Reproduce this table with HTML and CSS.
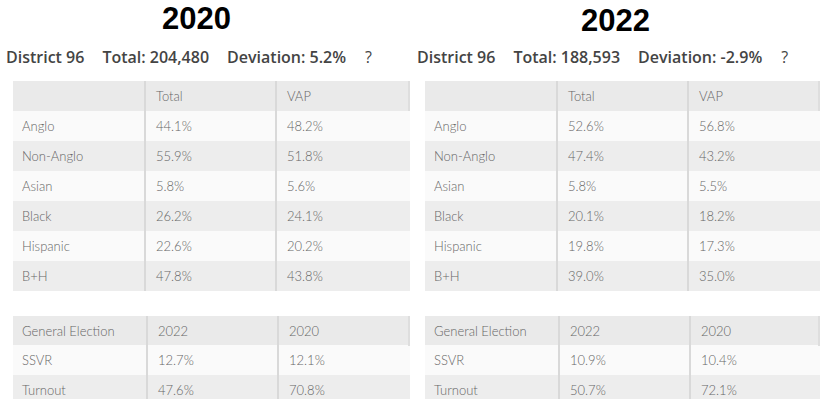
FILE: index.html
```html
<!DOCTYPE html>
<html>
<head>
<meta charset="utf-8">
<link rel="stylesheet" href="styles.css">
</head>
<body>
<div class="page">
  <section class="panel panel-left">
    <h1 class="title">2020</h1>
    <div class="summary">
      <span>District 96</span>
      <span>Total: 204,480</span>
      <span>Deviation: 5.2%</span>
      <span class="help">?</span>
    </div>
    <div class="tbl demo">
      <div class="row head"><div class="c">&nbsp;</div><div class="c">Total</div><div class="c">VAP</div></div>
      <div class="row light"><div class="c">Anglo</div><div class="c">44.1%</div><div class="c">48.2%</div></div>
      <div class="row"><div class="c">Non-Anglo</div><div class="c">55.9%</div><div class="c">51.8%</div></div>
      <div class="row light"><div class="c">Asian</div><div class="c">5.8%</div><div class="c">5.6%</div></div>
      <div class="row"><div class="c">Black</div><div class="c">26.2%</div><div class="c">24.1%</div></div>
      <div class="row light"><div class="c">Hispanic</div><div class="c">22.6%</div><div class="c">20.2%</div></div>
      <div class="row"><div class="c">B+H</div><div class="c">47.8%</div><div class="c">43.8%</div></div>
    </div>
    <div class="tbl elect">
      <div class="row head"><div class="c">General Election</div><div class="c">2022</div><div class="c">2020</div></div>
      <div class="row light"><div class="c">SSVR</div><div class="c">12.7%</div><div class="c">12.1%</div></div>
      <div class="row"><div class="c">Turnout</div><div class="c">47.6%</div><div class="c">70.8%</div></div>
    </div>
  </section>
  <section class="panel panel-right">
    <h1 class="title">2022</h1>
    <div class="summary">
      <span>District 96</span>
      <span>Total: 188,593</span>
      <span>Deviation: -2.9%</span>
      <span class="help">?</span>
    </div>
    <div class="tbl demo">
      <div class="row head"><div class="c">&nbsp;</div><div class="c">Total</div><div class="c">VAP</div></div>
      <div class="row light"><div class="c">Anglo</div><div class="c">52.6%</div><div class="c">56.8%</div></div>
      <div class="row"><div class="c">Non-Anglo</div><div class="c">47.4%</div><div class="c">43.2%</div></div>
      <div class="row light"><div class="c">Asian</div><div class="c">5.8%</div><div class="c">5.5%</div></div>
      <div class="row"><div class="c">Black</div><div class="c">20.1%</div><div class="c">18.2%</div></div>
      <div class="row light"><div class="c">Hispanic</div><div class="c">19.8%</div><div class="c">17.3%</div></div>
      <div class="row"><div class="c">B+H</div><div class="c">39.0%</div><div class="c">35.0%</div></div>
    </div>
    <div class="tbl elect">
      <div class="row head"><div class="c">General Election</div><div class="c">2022</div><div class="c">2020</div></div>
      <div class="row light"><div class="c">SSVR</div><div class="c">10.9%</div><div class="c">10.4%</div></div>
      <div class="row"><div class="c">Turnout</div><div class="c">50.7%</div><div class="c">72.1%</div></div>
    </div>
  </section>
</div>
</body>
</html>
```

FILE: styles.css
```css
html, body {
  margin: 0;
  padding: 0;
  background: #ffffff;
}

.page {
  display: grid;
  grid-template-columns: 413px 413px;
  width: 826px;
  height: 414px;
  overflow: hidden;
}

.panel {
  display: flex;
  flex-direction: column;
}

.title {
  margin: 0;
  height: 38px;
  font-family: "Liberation Sans", Arial, sans-serif;
  font-weight: bold;
  font-size: 31px;
  line-height: 38px;
  color: #000;
}

.panel-left .title {
  padding-left: 162px;
}

.panel-right .title {
  padding-left: 168px;
  padding-top: 2px;
  height: 36px;
}

.summary {
  display: flex;
  gap: 18px;
  height: 43px;
  font-family: "Open Sans", sans-serif;
  font-weight: 600;
  font-size: 16px;
  line-height: 38px;
  color: #444444;
}

.panel-left .summary {
  padding-left: 6px;
}

.panel-right .summary {
  padding-left: 4px;
}

.summary .help {
  margin-left: 1px;
  font-weight: 500;
}

.tbl {
  font-family: Lato, sans-serif;
  font-weight: 300;
  font-size: 13px;
  color: #666666;
}

.panel-left .tbl {
  margin-left: 13px;
  width: 397px;
}

.panel-right .tbl {
  margin-left: 12px;
  width: 395px;
}

.demo .row {
  grid-template-columns: 131px 131px 1fr;
}

.elect {
  margin-top: 25px;
  height: 83px;
  overflow: hidden;
}

.elect .row {
  grid-template-columns: 133px 131px 1fr;
}

.elect .row.head {
  height: 29px;
}

.row {
  display: grid;
  height: 30px;
  background: #ededed;
}

.row.light {
  background: #fafafa;
}

.row.head {
  background: #eaeaea;
}

.c {
  padding-left: 10px;
  line-height: 30px;
  white-space: nowrap;
  border-left: 2px solid #d9d9d9;
}

.c:first-child {
  padding-left: 9px;
  border-left: none;
}

.row.head .c:last-child {
  border-right: 2px solid #dedede;
}
```
